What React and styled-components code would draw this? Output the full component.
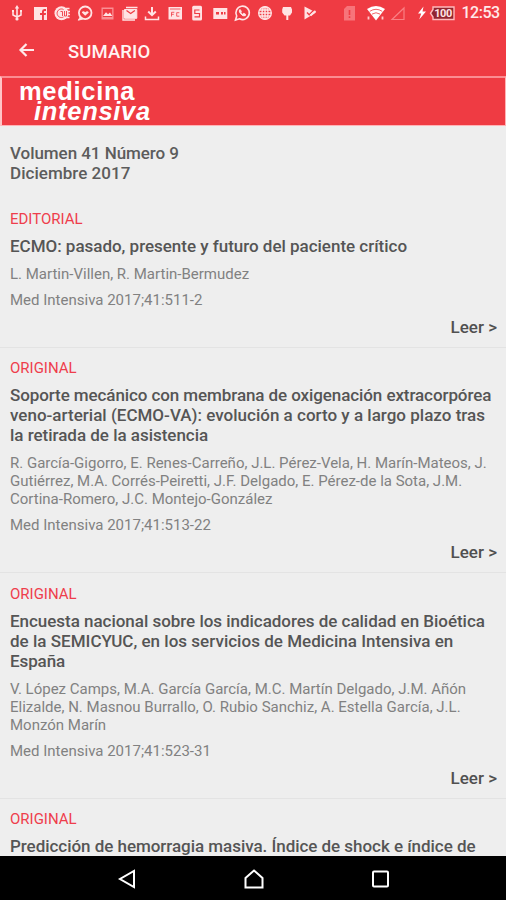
import React from 'react';
import styled, { createGlobalStyle, css } from 'styled-components';

const GlobalStyle = createGlobalStyle`
  * {
    box-sizing: border-box;
  }
  body {
    margin: 0;
    background-color: #eeeeee;
    font-family: Roboto, 'Liberation Sans', sans-serif;
  }
`;

const Screen = styled.div`
  display: flex;
  flex-direction: column;
  width: 506px;
  height: 900px;
  overflow: hidden;
  background-color: #eeeeee;
`;

const StatusBar = styled.div`
  display: flex;
  align-items: center;
  flex-shrink: 0;
  height: 25px;
  padding-left: 9px;
  background-color: #ef3b43;
`;

const Notifications = styled.div`
  display: flex;
  gap: 6.5px;
`;

const SystemIcons = styled.div`
  display: flex;
  align-items: center;
  margin-left: 26px;
`;

const StatusIcon = styled.svg`
  display: block;
  width: ${(props) => props.$width || 16}px;
  height: 18px;
  flex-shrink: 0;
  margin-left: ${(props) => props.$gap || 0}px;
  overflow: visible;
`;

const Clock = styled.span`
  margin-left: 7px;
  font-size: 16px;
  font-weight: 500;
  line-height: 24px;
  letter-spacing: -0.5px;
  white-space: nowrap;
  color: #ffe9ea;
`;

const AppBar = styled.header`
  display: flex;
  align-items: center;
  flex-shrink: 0;
  height: 51px;
  padding: 2px 0 0 18px;
  background-color: #ef3b43;
`;

const BackIcon = styled.svg`
  width: 17px;
  height: 16px;
  margin-top: -4px;
`;

const AppTitle = styled.h1`
  margin: 0 0 0 33px;
  font-size: 18.5px;
  font-weight: 500;
  line-height: 24px;
  letter-spacing: 0.1px;
  color: #fff3f3;
`;

const Banner = styled.div`
  flex-shrink: 0;
  height: 50px;
  padding: 3px 0 0 17px;
  background-color: #ef3b43;
  border: 1px solid #ffb3b6;
  border-top: 2px solid #fb8d92;
  border-left: 2px solid #ffc4c6;
`;

const BannerWord = styled.div`
  font-family: 'Liberation Sans', Arial, sans-serif;
  font-size: 25.5px;
  font-weight: 700;
  line-height: 20px;
  letter-spacing: 0.7px;
  color: #fff;
  ${(props) =>
    props.$italic &&
    css`
      padding-left: 15px;
      font-style: italic;
    `}
`;

const Content = styled.main`
  flex: 1;
  min-height: 0;
  overflow: hidden;
`;

const Issue = styled.h2`
  height: 72px;
  margin: 0;
  padding: 16.5px 10px 0;
  font-size: 17px;
  font-weight: 500;
  line-height: 20px;
  color: #5c5c5c;
`;

const Entry = styled.article`
  height: ${(props) => props.$height}px;
  padding: 11.9px 9px 0 10px;
  border-bottom: 1px solid #e3e3e3;
`;

const Section = styled.div`
  font-size: 15px;
  line-height: 18px;
  color: #ee3d4c;
`;

const Line = styled.span`
  display: block;
  width: max-content;
  white-space: nowrap;
  letter-spacing: ${(props) => props.$track || 0}px;
`;

const EntryTitle = styled.h3`
  margin: 8.1px 0 0;
  font-size: 17px;
  font-weight: 500;
  line-height: 20px;
  color: #555555;
`;

const Authors = styled.p`
  margin: 9px 0 0;
  font-size: 15px;
  line-height: 18px;
  color: #818181;
`;

const Reference = styled(Authors)`
  margin-top: 8px;
`;

const ReadLink = styled.div`
  margin-top: 7.9px;
  font-size: 17px;
  font-weight: 500;
  line-height: 20px;
  text-align: right;
  color: #505050;
`;

const NavBar = styled.nav`
  display: flex;
  align-items: center;
  justify-content: space-between;
  flex-shrink: 0;
  height: 44px;
  padding: 2px 116px 0 117px;
  background-color: #000;
`;

const NavIcon = styled.svg`
  width: 20px;
  height: 20px;
  fill: none;
  stroke: #fff;
  stroke-width: 2;
`;

const entries = [
  {
    section: 'EDITORIAL',
    height: 149.5,
    title: [['ECMO: pasado, presente y futuro del paciente crítico', -0.02]],
    authors: ['L. Martin-Villen, R. Martin-Bermudez'],
    reference: 'Med Intensiva 2017;41:511-2',
  },
  {
    section: 'ORIGINAL',
    height: 225.5,
    title: [
      ['Soporte mecánico con membrana de oxigenación extracorpórea', -0.09],
      ['veno-arterial (ECMO-VA): evolución a corto y a largo plazo tras', 0.01],
      ['la retirada de la asistencia', -0.02],
    ],
    authors: [
      'R. García-Gigorro, E. Renes-Carreño, J.L. Pérez-Vela, H. Marín-Mateos, J.',
      'Gutiérrez, M.A. Corrés-Peiretti, J.F. Delgado, E. Pérez-de la Sota, J.M.',
      'Cortina-Romero, J.C. Montejo-González',
    ],
    reference: 'Med Intensiva 2017;41:513-22',
  },
  {
    section: 'ORIGINAL',
    height: 225.5,
    title: [
      ['Encuesta nacional sobre los indicadores de calidad en Bioética', -0.03],
      ['de la SEMICYUC, en los servicios de Medicina Intensiva en', 0.02],
      ['España', -0.1],
    ],
    authors: [
      'V. López Camps, M.A. García García, M.C. Martín Delgado, J.M. Añón',
      'Elizalde, N. Masnou Burrallo, O. Rubio Sanchiz, A. Estella García, J.L.',
      'Monzón Marín',
    ],
    reference: 'Med Intensiva 2017;41:523-31',
  },
  {
    section: 'ORIGINAL',
    height: 225.5,
    title: [['Predicción de hemorragia masiva. Índice de shock e índice de', -0.04]],
    authors: [],
  },
];

const light = '#ffe3e4';
const red = '#ef3b43';

function NotificationIcons() {
  return (
    <Notifications>
      {/* usb */}
      <StatusIcon viewBox="0 0 16 18" fill="none" stroke={light} strokeWidth="1.6">
        <path d="M8 3v12M4 7v4l4 2 4-2V7" />
        <path d="M8 1l2.2 3.5H5.8zM3 6h2v2H3zM11 6h2v2h-2z" fill={light} stroke="none" />
        <circle cx="8" cy="15" r="1.6" fill={light} stroke="none" />
      </StatusIcon>
      {/* facebook */}
      <StatusIcon viewBox="0 0 16 18">
        <path d="M2 3h13v13H2z" fill={light} />
        <path d="M10 16v-5H8V9h2V7.5Q10 5 12.3 5H14v2h-1.3q-.8 0-.8.8V9H14l-.3 2h-1.8v5z" fill={red} />
      </StatusIcon>
      {/* news */}
      <StatusIcon viewBox="0 0 16 18">
        <circle cx="7.5" cy="9.3" r="7" fill={light} />
        <path d="M12 4.5h3.5M12 7.5h4M12 10.5h4M11 13.5h4.5" stroke={light} strokeWidth="1.6" />
        <path d="M9.5 5.5A4.3 4.3 0 1 0 9.5 13M6.5 7.5h2v4.5M10.5 7v5h2V7" fill="none" stroke={red} strokeWidth="0.9" />
      </StatusIcon>
      {/* messenger */}
      <StatusIcon viewBox="0 0 16 18" fill="none" stroke={light}>
        <circle cx="8.2" cy="8.8" r="6.3" strokeWidth="1.8" />
        <path d="M3.5 12.5L1.3 16.2l4.5-1.2" fill={light} />
        <path d="M4.8 8.5Q6 6.3 8.2 8.2 10.4 6.3 11.8 8.5L8.2 11.7z" fill={light} stroke="none" />
      </StatusIcon>
      {/* image */}
      <StatusIcon viewBox="0 0 16 18">
        <path d="M2.5 3.5h12v12h-12z" fill="#fa8f94" />
        <path d="M3.8 5h9.4v8H3.8z" fill={red} />
        <path d="M4 12l3-3.8 2 2 2-1.6 2.3 3.4z" fill={light} />
      </StatusIcon>
      {/* mail */}
      <StatusIcon viewBox="0 0 16 18" fill="none" stroke={light}>
        <path d="M1 6v10h12M4 3.5h11.5" strokeWidth="1.4" />
        <path d="M2.5 5.5h12.3v8.8H2.5z" fill={light} />
        <path d="M4.5 6.5l4.2 3 4.2-3" stroke={red} strokeWidth="1.3" />
      </StatusIcon>
      {/* download */}
      <StatusIcon viewBox="0 0 16 18" fill="none" stroke={light}>
        <path d="M8 3v8M4.2 7.5L8 11.2l3.8-3.7" strokeWidth="2" />
        <path d="M1.5 12.5v3h13v-3" strokeWidth="1.5" />
      </StatusIcon>
      {/* news card */}
      <StatusIcon viewBox="0 0 16 18">
        <path d="M1.5 3h13.5v12.5H1.5z" fill={light} />
        <path d="M3 5h10.5M4.5 12.5V8.3h2.8M4.5 10.3h2.3M12.3 8.7H9.7v3.5h2.6" fill="none" stroke={red} strokeWidth="0.8" />
      </StatusIcon>
      {/* phone */}
      <StatusIcon viewBox="0 0 16 18">
        <rect x="3.2" y="1.8" width="9.8" height="14.7" rx="1.5" fill={light} />
        <path d="M10.5 6H5.8v3.5h4.7v3.3H5.5" fill="none" stroke={red} strokeWidth="1.2" />
      </StatusIcon>
      {/* card */}
      <StatusIcon viewBox="0 0 16 18">
        <path d="M1.3 4h14v11h-14z" fill={light} />
        <path d="M4 8h3v2.5H4zM9 8h2v2.5H9zM12 8h1.5v2.5H12z" fill={red} />
      </StatusIcon>
      {/* whatsapp */}
      <StatusIcon viewBox="0 0 16 18" fill="none" stroke={light}>
        <path d="M1.5 16l1.2-4A6.7 6.7 0 1 1 5.5 14.8z" strokeWidth="1.6" />
        <path d="M6 5.5q-1.8 1 .3 3.9 2.8 3.5 5 2.3l.3-1.4-2-1-1 1Q7.2 9.5 6.7 8.1l.7-.8z" fill={light} />
      </StatusIcon>
      {/* globe */}
      <StatusIcon viewBox="0 0 16 18" fill="none" stroke={light} strokeWidth="1.4">
        <circle cx="8" cy="9" r="6.3" />
        <ellipse cx="8" cy="9" rx="3" ry="6.3" />
        <path d="M1.7 9h12.6M2.7 6h10.6M2.7 12h10.6M8 2.7v12.6" />
      </StatusIcon>
      {/* pin */}
      <StatusIcon viewBox="0 0 16 18" fill={light}>
        <path d="M4 3h8l1 2.5v3l-2 3H9.3V16h-2v-4.5H5.5l-2.3-3v-3z" />
      </StatusIcon>
      {/* play */}
      <StatusIcon viewBox="0 0 16 18">
        <path d="M2.5 2.5L14 8.5 2.5 15.5z" fill={light} />
        <path d="M5 8.5l2.2 2.3 4.5-4.5" fill="none" stroke={red} strokeWidth="1.3" />
        <path d="M8.5 11.5L13.5 7" stroke={light} strokeWidth="1.8" />
      </StatusIcon>
    </Notifications>
  );
}

function PhoneStatus() {
  return (
    <SystemIcons>
      <StatusIcon $width={11} viewBox="0 0 11 18">
        <path d="M3 2h8v14.5H0V5z" fill="#f7747a" />
        <path d="M5.5 6v5M5.5 12.3V14" stroke={red} strokeWidth="1.6" />
      </StatusIcon>
      <StatusIcon $width={18} $gap={12} viewBox="0 0 18 18">
        <path d="M0 5Q9-1 18 5L9 16.5z" fill="#fff" />
        <path d="M2.8 7.3q6.2-4 12.4 0M5 10.1q4-2.7 8 0" fill="none" stroke={red} strokeWidth="0.8" />
        <path d="M1.5 12.5v3M15.5 12.5v3" stroke="#ffc8ca" strokeWidth="1.8" />
      </StatusIcon>
      <StatusIcon $width={14} $gap={6} viewBox="0 0 14 18">
        <path d="M1 15.5L13 4v11.5z" fill="none" stroke="#f97f84" strokeWidth="1.2" />
      </StatusIcon>
      <StatusIcon $width={8} $gap={13} viewBox="0 0 8 18">
        <path d="M5.5 2.5L0 9.5h3.2L1.2 15.5 8 7.5H4.5z" fill="#fff" />
      </StatusIcon>
      <StatusIcon $width={26} $gap={3} viewBox="0 0 26 18">
        <path d="M4 3h21v12.5H4V13L1.5 9.25 4 5.5z" fill="#922530" stroke="#ffb9bc" strokeWidth="1.4" />
        <text x="14" y="13.2" textAnchor="middle" fontFamily="Roboto" fontSize="11" fontWeight="700" letterSpacing="-0.5" fill="#ffe3e4">
          100
        </text>
      </StatusIcon>
      <Clock>12:53</Clock>
    </SystemIcons>
  );
}

export default function App() {
  return (
    <>
      <GlobalStyle />
      <Screen>
        <StatusBar>
          <NotificationIcons />
          <PhoneStatus />
        </StatusBar>
        <AppBar>
          <BackIcon viewBox="0 0 17 16" fill="none" stroke="#ffe9ea" strokeWidth="2.2">
            <path d="M16 8H2.5M8.5 2L2.5 8l6 6" />
          </BackIcon>
          <AppTitle>SUMARIO</AppTitle>
        </AppBar>
        <Banner>
          <BannerWord>medicina</BannerWord>
          <BannerWord $italic>intensiva</BannerWord>
        </Banner>
        <Content>
          <Issue>
            <Line $track={-0.05}>Volumen 41 Número 9</Line>
            <Line $track={0.03}>Diciembre 2017</Line>
          </Issue>
          {entries.map((entry, index) => (
            <Entry key={index} $height={entry.height}>
              <Section>{entry.section}</Section>
              <EntryTitle>
                {entry.title.map(([text, track]) => (
                  <Line key={text} $track={track}>
                    {text}
                  </Line>
                ))}
              </EntryTitle>
              <Authors>
                {entry.authors.map((line) => (
                  <Line key={line}>{line}</Line>
                ))}
              </Authors>
              {entry.reference && <Reference>{entry.reference}</Reference>}
              {entry.reference && <ReadLink>Leer &gt;</ReadLink>}
            </Entry>
          ))}
        </Content>
        <NavBar>
          <NavIcon viewBox="0 0 20 20">
            <path d="M17 2v16L3 10z" />
          </NavIcon>
          <NavIcon viewBox="0 0 20 20">
            <path d="M10 1.5L18.5 9v9.5h-17V9z" />
          </NavIcon>
          <NavIcon viewBox="0 0 20 20">
            <rect x="3" y="2.5" width="15" height="15" rx="1" />
          </NavIcon>
        </NavBar>
      </Screen>
    </>
  );
}
